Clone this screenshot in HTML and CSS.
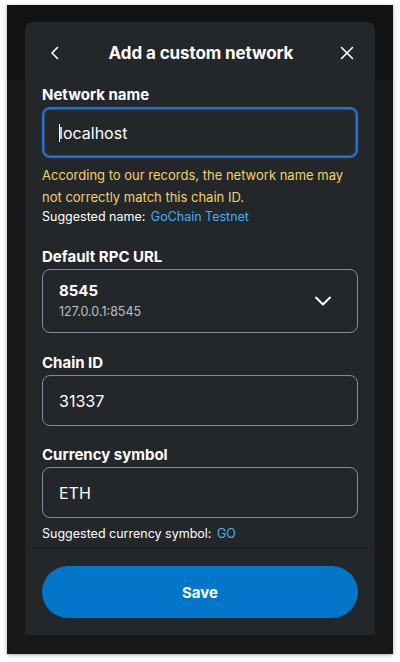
FILE: index.html
```html
<!DOCTYPE html>
<html lang="en">
<head>
<meta charset="utf-8">
<title>Add a custom network</title>
<link rel="stylesheet" href="styles.css">
</head>
<body>
<div class="frame">
  <div class="modal">
    <div class="header">
      <button class="icon-btn" aria-label="Back">
        <svg width="16" height="16" viewBox="0 0 16 16"><path d="M10.5 2.5 L5 8 L10.5 13.5" fill="none" stroke="#fff" stroke-width="1.6" stroke-linecap="round" stroke-linejoin="round"/></svg>
      </button>
      <h1 class="title">Add a custom network</h1>
      <button class="icon-btn" aria-label="Close">
        <svg width="16" height="16" viewBox="0 0 16 16"><path d="M2.5 2.5 L13.5 13.5 M13.5 2.5 L2.5 13.5" fill="none" stroke="#fff" stroke-width="1.6" stroke-linecap="round"/></svg>
      </button>
    </div>
    <div class="body">
      <div class="field f1">
        <label class="label">Network name</label>
        <div class="input focused"><span class="caret"></span>localhost</div>
        <p class="warning">According to our records, the network name may not correctly match this chain ID.</p>
        <p class="hint">Suggested name: <a class="link">GoChain Testnet</a></p>
      </div>
      <div class="field f2">
        <label class="label">Default RPC URL</label>
        <div class="select">
          <div class="select-text">
            <span class="select-main">8545</span>
            <span class="select-sub">127.0.0.1:8545</span>
          </div>
          <svg class="chev" width="20" height="20" viewBox="0 0 20 20"><path d="M3 6.5 L10 13.5 L17 6.5" fill="none" stroke="#fff" stroke-width="2" stroke-linecap="round" stroke-linejoin="round"/></svg>
        </div>
      </div>
      <div class="field f3">
        <label class="label">Chain ID</label>
        <div class="input">31337</div>
      </div>
      <div class="field f4">
        <label class="label">Currency symbol</label>
        <div class="input">ETH</div>
        <p class="hint hint-gap">Suggested currency symbol: <a class="link">GO</a></p>
      </div>
    </div>
    <div class="footer">
      <button class="save">Save</button>
    </div>
  </div>
</div>
</body>
</html>
```
FILE: styles.css
```css
* { box-sizing: border-box; }
html, body { margin: 0; padding: 0; background: #ffffff; }
body {
  font-family: Inter, "Noto Sans", sans-serif;
  color: #ffffff;
  width: 400px;
  height: 662px;
  overflow: hidden;
}
.frame {
  margin: 5px 7px 0 7px;
  width: 386px;
  height: 649px;
  background: linear-gradient(#111214 0, #111214 75px, #17181a 75px);
  box-shadow: 0 1px 4px rgba(0,0,0,0.35);
  padding: 17px 18px 0 18px;
}
.modal {
  width: 350px;
  height: 613px;
  background: #24272a;
  border-radius: 8px 8px 0 0;
  display: flex;
  flex-direction: column;
}
.header {
  flex-shrink: 0;
  height: 61px;
  display: flex;
  align-items: center;
  justify-content: space-between;
  padding: 0 16px 0 18px;
}
.icon-btn {
  width: 24px;
  height: 24px;
  padding: 0;
  border: 0;
  background: none;
  display: flex;
  align-items: center;
  justify-content: center;
}
.title {
  margin: 0;
  font-size: 17px;
  font-weight: 700;
  line-height: 24px;
  letter-spacing: -0.1px;
}
.body {
  flex: 1;
  min-height: 0;
  overflow: hidden;
  padding: 0 17px;
  display: flex;
  flex-direction: column;
}
.field {
  flex-shrink: 0;
  display: flex;
  flex-direction: column;
}
.f1 { margin-bottom: 19px; }
.f2 { margin-bottom: 18px; }
.f3 { margin-bottom: 17px; }
.label {
  font-size: 15px;
  font-weight: 700;
  line-height: 24px;
}
.input {
  height: 51px;
  border: 1px solid #858b9a;
  border-radius: 8px;
  display: flex;
  align-items: center;
  padding: 0 16px;
  font-size: 16px;
  line-height: 24px;
}
.input.focused {
  border: 2px solid #1f73e0;
  padding: 0 15px;
  box-shadow: inset 0 0 0 1px rgba(120,170,255,0.25);
}
.caret {
  display: inline-block;
  width: 1px;
  height: 18px;
  background: #ffffff;
  margin-right: -1px;
}
.warning {
  margin: 6px 0 0 0;
  font-size: 13px;
  line-height: 22px;
  color: #f5d26a;
}
.hint {
  margin: 0;
  font-size: 12.5px;
  line-height: 18px;
}
.hint-gap { margin-top: 7px; }
.link { color: #43aefc; margin-left: 2px; }
.select {
  height: 64px;
  border: 1px solid #858b9a;
  border-radius: 8px;
  display: flex;
  align-items: center;
  justify-content: space-between;
  padding: 0 24px 0 16px;
}
.select-text { display: flex; flex-direction: column; }
.select-main { font-size: 15px; font-weight: 700; line-height: 22px; }
.select-sub { font-size: 12.5px; line-height: 20px; color: #bbc0c5; }
.footer {
  flex-shrink: 0;
  height: 87px;
  border-top: 1px solid #1e2024;
  padding: 17px 17px 0 17px;
}
.save {
  width: 100%;
  height: 52px;
  border: 0;
  border-radius: 26px;
  background: #0376c9;
  color: #ffffff;
  font-family: Inter, "Noto Sans", sans-serif;
  font-size: 15px;
  font-weight: 700;
}
```
